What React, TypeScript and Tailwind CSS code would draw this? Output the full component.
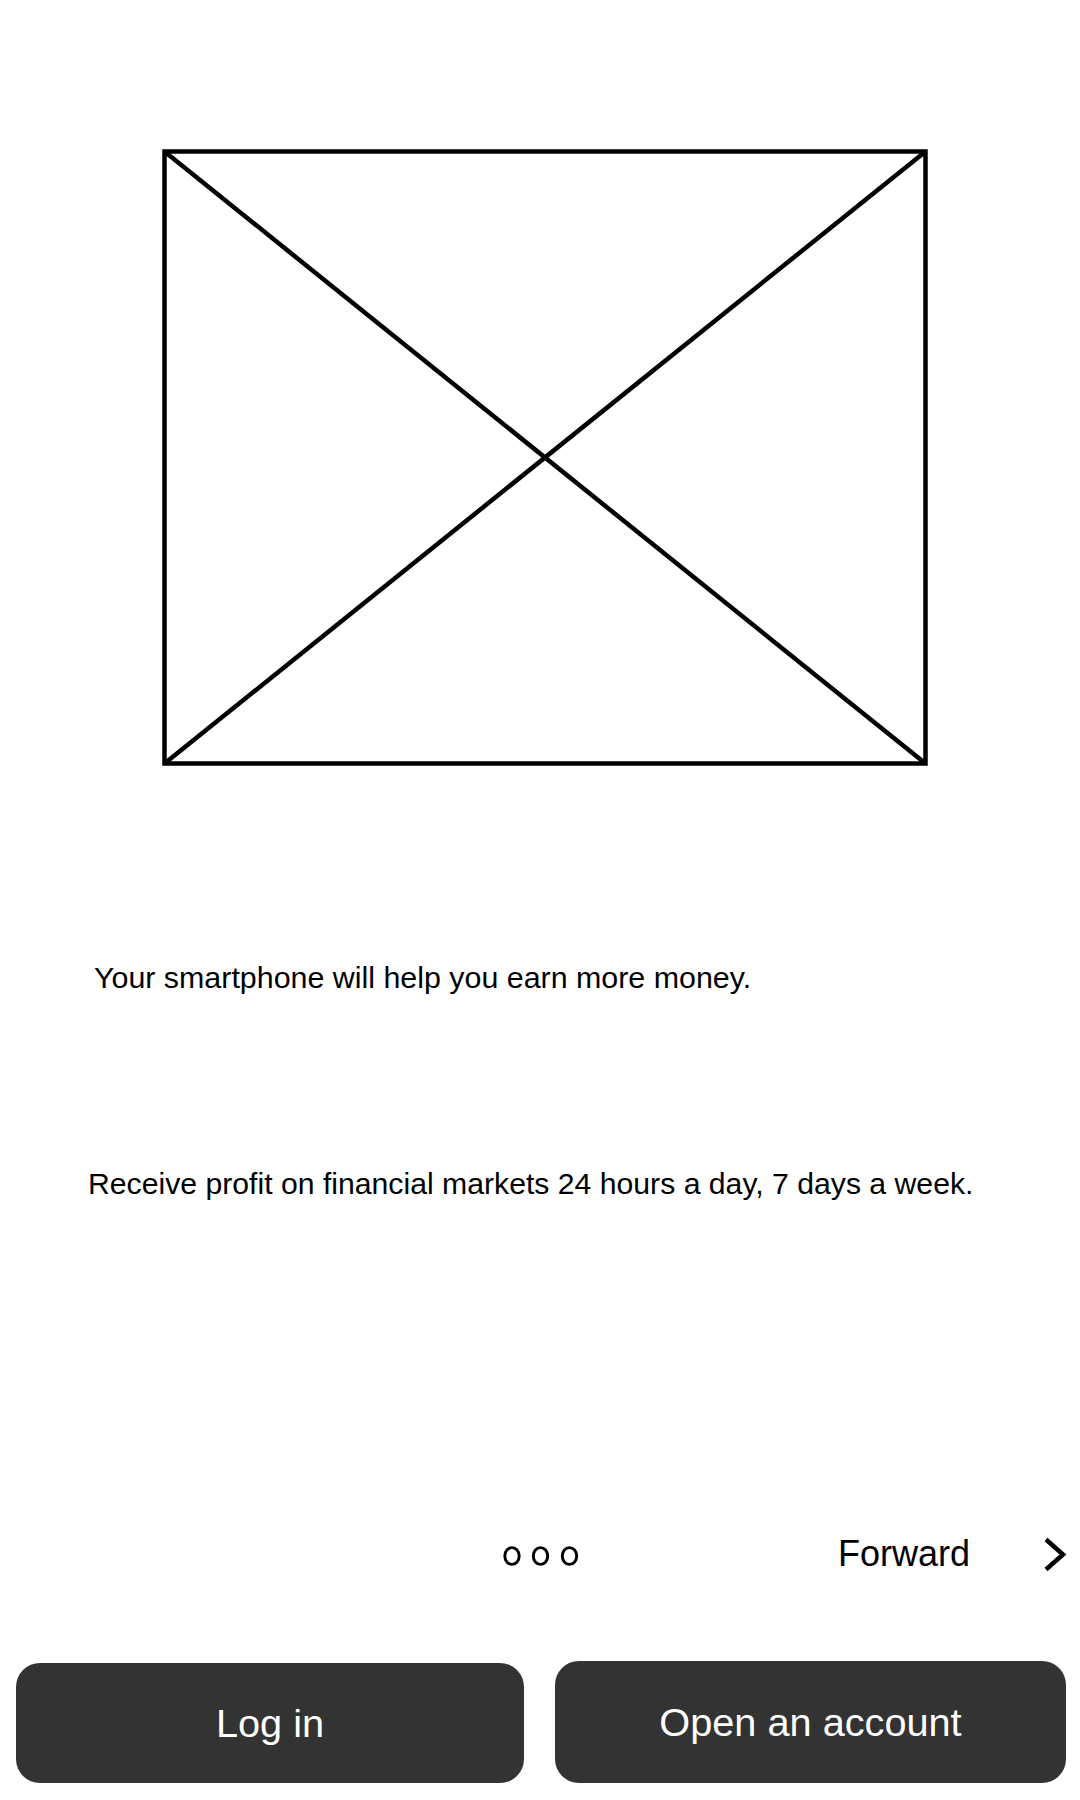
import React from "react";

export default function App() {
  return (
    <div className="w-[1080px] h-[1800px] bg-white flex flex-col pt-[149px] font-['Liberation_Sans',Arial,sans-serif] text-black">
      <svg
        className="ml-[162px] block"
        width="768"
        height="618"
        viewBox="0 0 768 618"
        fill="none"
        stroke="#000"
        strokeWidth="4.5"
      >
        <rect x="2.5" y="2.5" width="761" height="612" />
        <line x1="2.5" y1="2.5" x2="763.5" y2="614.5" />
        <line x1="763.5" y1="2.5" x2="2.5" y2="614.5" />
      </svg>

      <p className="mt-[193px] ml-[94px] text-[30.4px] leading-[34px] whitespace-nowrap">
        Your smartphone will help you earn more money.
      </p>

      <p className="mt-[173px] ml-[88px] text-[30.2px] leading-[34px] whitespace-nowrap">
        Receive profit on financial markets 24 hours a day, 7 days a week.
      </p>

      <div className="mt-[333px] h-[40px] flex items-center">
        <svg
          className="ml-[502px] block mt-[3px]"
          width="80"
          height="22"
          viewBox="0 0 80 22"
          fill="none"
          stroke="#000"
          strokeWidth="2.9"
        >
          <ellipse cx="10" cy="11" rx="7.2" ry="8.4" />
          <ellipse cx="38.5" cy="11" rx="7.2" ry="8.4" />
          <ellipse cx="67.5" cy="11" rx="7.2" ry="8.4" />
        </svg>
        <span className="ml-[256px] text-[36px] leading-[40px]">Forward</span>
        <svg
          className="ml-[73px] block mt-[2px]"
          width="24"
          height="36"
          viewBox="0 0 24 36"
          fill="none"
          stroke="#000"
          strokeWidth="4.5"
          strokeLinejoin="miter"
        >
          <path d="M3 2.5 L20 17.5 L3 32.5" />
        </svg>
      </div>

      <div className="mt-[87px] flex items-end pl-[16px] gap-[31px]">
        <button className="w-[508px] h-[120px] rounded-[24px] bg-[#333333] text-white text-[39.7px] leading-[44px] flex items-center justify-center">
          Log in
        </button>
        <button className="w-[511px] h-[122px] rounded-[24px] bg-[#333333] text-white text-[39.7px] leading-[44px] flex items-center justify-center">
          Open an account
        </button>
      </div>
    </div>
  );
}
